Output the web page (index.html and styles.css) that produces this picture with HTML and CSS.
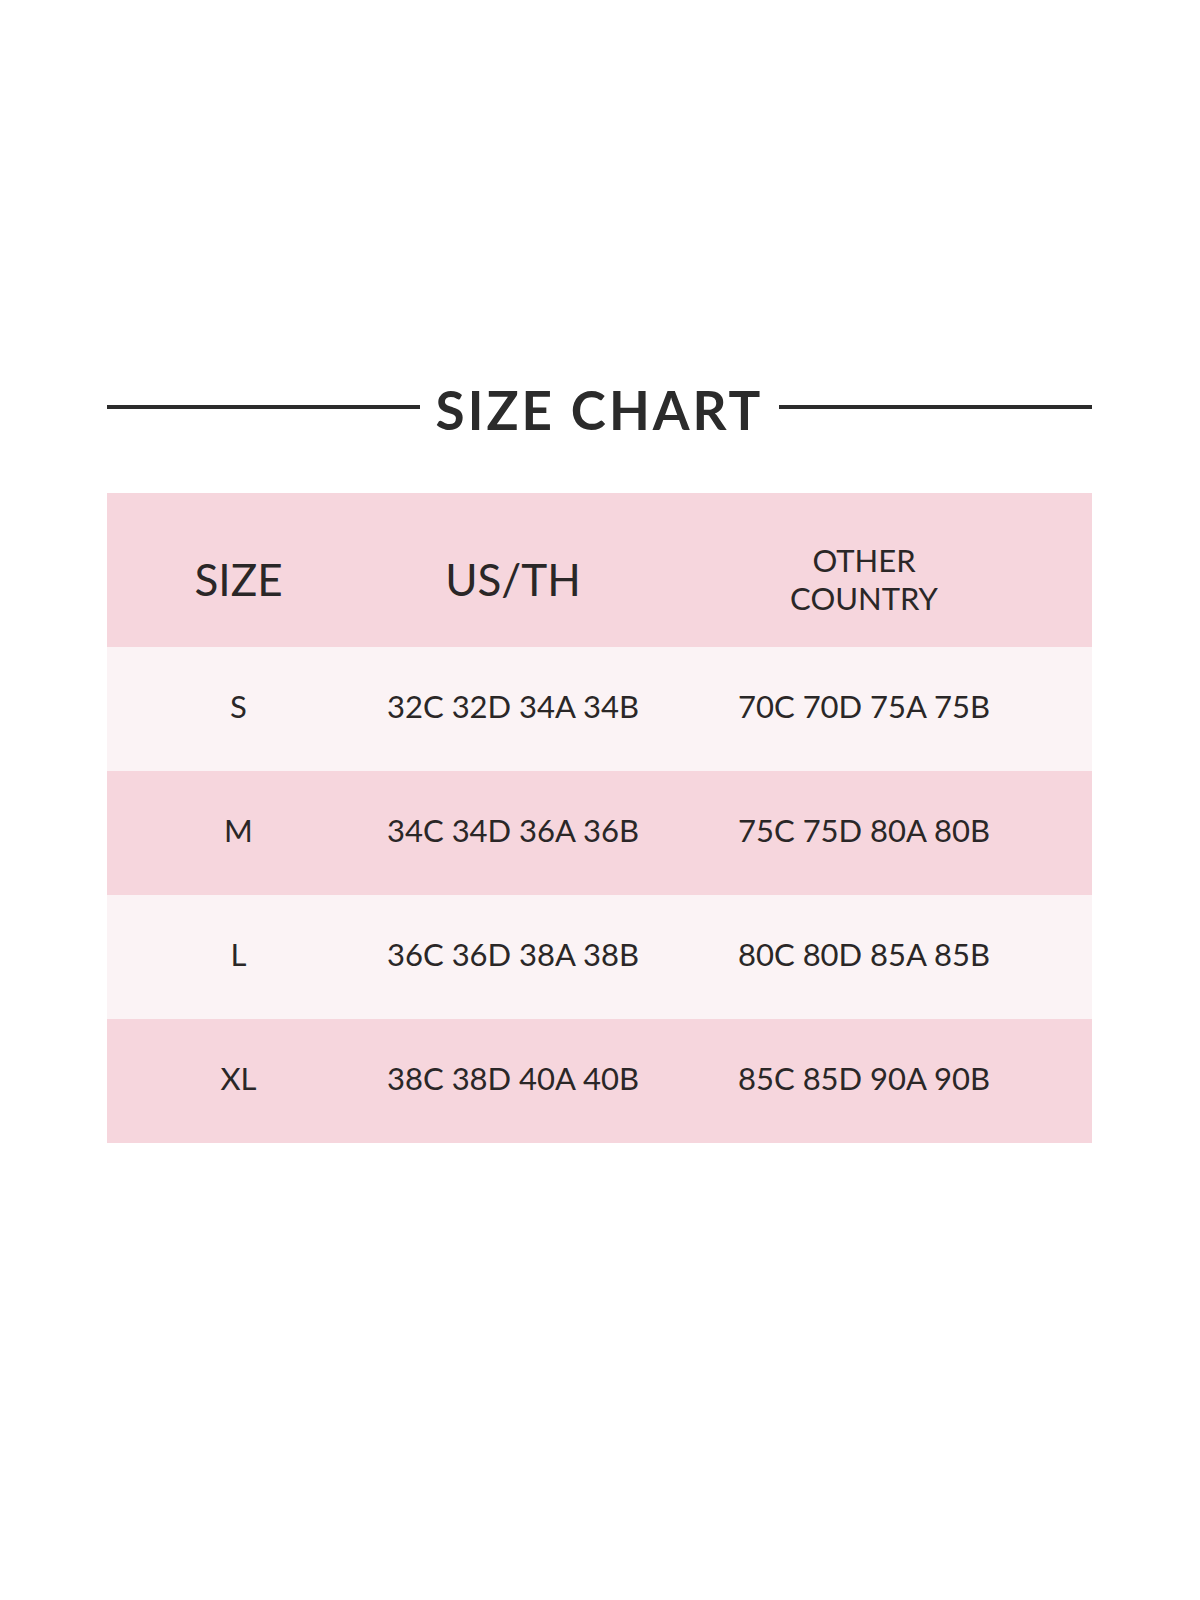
FILE: index.html
```html
<!DOCTYPE html>
<html>
<head>
<meta charset="utf-8">
<link rel="stylesheet" href="styles.css">
</head>
<body>
<div class="page">
  <div class="title-row">
    <span class="rule"></span>
    <h1 class="title">SIZE CHART</h1>
    <span class="rule"></span>
  </div>
  <div class="chart">
    <div class="row head">
      <div class="cell">SIZE</div>
      <div class="cell">US/TH</div>
      <div class="cell small">OTHER<br>COUNTRY</div>
    </div>
    <div class="row light">
      <div class="cell">S</div>
      <div class="cell">32C 32D 34A 34B</div>
      <div class="cell">70C 70D 75A 75B</div>
    </div>
    <div class="row pink">
      <div class="cell">M</div>
      <div class="cell">34C 34D 36A 36B</div>
      <div class="cell">75C 75D 80A 80B</div>
    </div>
    <div class="row light">
      <div class="cell">L</div>
      <div class="cell">36C 36D 38A 38B</div>
      <div class="cell">80C 80D 85A 85B</div>
    </div>
    <div class="row pink">
      <div class="cell">XL</div>
      <div class="cell">38C 38D 40A 40B</div>
      <div class="cell">85C 85D 90A 90B</div>
    </div>
  </div>
</div>
</body>
</html>
```
FILE: styles.css
```css
html, body {
  margin: 0;
  padding: 0;
  background: #ffffff;
}
body {
  font-family: Lato, "Open Sans", sans-serif;
  color: #2a2727;
}
.page {
  width: 985px;
  margin-left: 107px;
  padding-top: 379px;
}
.title-row {
  display: flex;
  align-items: center;
  gap: 16px;
  height: 62px;
}
.rule {
  flex: 1;
  height: 4px;
  background: #2b2b2b;
  margin-top: -6px;
}
.title {
  margin: 0;
  font-size: 53px;
  font-weight: 700;
  letter-spacing: 3px;
  line-height: 62px;
  color: #2b2b2b;
}
.chart {
  margin-top: 52px;
}
.row {
  display: grid;
  grid-template-columns: 263px 286px 416px;
  padding-right: 20px;
  height: 124px;
  align-items: center;
}
.head {
  height: 154px;
  background: #f6d6dd;
  padding-top: 22px;
  box-sizing: border-box;
}
.light { background: #fbf3f5; }
.pink { background: #f6d6dd; }
.cell {
  text-align: center;
  font-size: 31px;
  line-height: 36px;
  padding-bottom: 6px;
}
.head .cell {
  font-size: 44px;
  line-height: 48px;
  padding-bottom: 4px;
}
.head .cell.small {
  font-size: 31px;
  line-height: 38px;
}
```
